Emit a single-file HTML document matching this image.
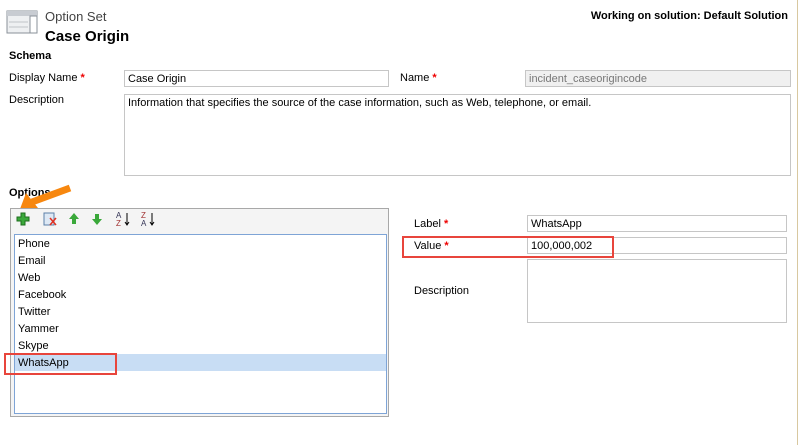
<!DOCTYPE html>
<html><head><style>
body{margin:0;width:800px;height:445px;background:#fff;font-family:"Liberation Sans",sans-serif;font-size:11px;color:#000;position:relative;overflow:hidden}
.a{position:absolute}
.in{position:absolute;border:1px solid #c6c6c6;background:#fff;box-sizing:border-box;padding:2px 3px 0;font-size:11px}
.st{color:#e00;font-weight:bold}
.item{position:absolute;left:18px;font-size:11px}
</style></head><body>
<div class="a" style="right:2px;top:0;width:1px;height:445px;background:#d8c8a0"></div>
<svg class="a" style="left:6px;top:10px" width="34" height="26"><rect x="1" y="1" width="30" height="22" fill="#eef0f2" stroke="#8a9098"/><rect x="1" y="1" width="30" height="5" fill="#c8ccd2"/><rect x="24" y="6" width="7" height="17" fill="#fff" stroke="#8a9098"/><line x1="3" y1="12" x2="22" y2="12" stroke="#c0c4c8"/><line x1="3" y1="17" x2="22" y2="17" stroke="#c0c4c8"/></svg>
<div class="a" style="left:45px;top:9px;font-size:13px;color:#444">Option Set</div>
<div class="a" style="left:45px;top:28px;font-size:15px;font-weight:bold">Case Origin</div>
<div class="a" style="right:12px;top:10px;font-size:11px;font-weight:bold">Working on solution: Default Solution</div>
<div class="a" style="left:9px;top:50px;font-weight:bold">Schema</div>
<div class="a" style="left:9px;top:72px">Display Name <span class="st">*</span></div>
<div class="in" style="left:124px;top:70px;width:265px;height:17px">Case Origin</div>
<div class="a" style="left:400px;top:72px">Name <span class="st">*</span></div>
<div class="in" style="left:525px;top:70px;width:266px;height:17px;background:#f0f0f0;color:#777">incident_caseorigincode</div>
<div class="a" style="left:9px;top:94px">Description</div>
<div class="in" style="left:124px;top:94px;width:667px;height:82px">Information that specifies the source of the case information, such as Web, telephone, or email.</div>
<div class="a" style="left:9px;top:187px;font-weight:bold">Options</div>
<svg class="a" style="left:14px;top:184px" width="60" height="30"><path d="M56 4 L18 18" stroke="#f7870f" stroke-width="7"/><path d="M6 25 L12 9 L24 24 Z" fill="#f7870f"/></svg>
<div class="a" style="left:10px;top:208px;width:379px;height:209px;border:1px solid #a8a8a8;box-sizing:border-box;background:#f4f4f4"></div>
<svg class="a" style="left:16px;top:210px" width="150" height="18">
<path d="M5 3h4v4h4v4h-4v4h-4v-4h-4v-4h4z" fill="#3aa83a" stroke="#1d6e1d"/>
<rect x="28" y="3" width="10" height="12" fill="#dde8f4" stroke="#5c7fa8"/><path d="M34 8l6 7M40 8l-6 7" stroke="#e03020" stroke-width="1.5"/>
<path d="M58 3l5 6h-3v5h-4v-5h-3z" fill="#3aa83a"/>
<path d="M81 15l5-6h-3v-5h-4v5h-3z" fill="#3aa83a"/>
<text x="100" y="8" font-size="8" fill="#335">A</text><text x="100" y="16" font-size="8" fill="#a03030">Z</text><path d="M111 3v12M109 12l2 3 2-3" stroke="#000" fill="none"/>
<text x="125" y="8" font-size="8" fill="#a03030">Z</text><text x="125" y="16" font-size="8" fill="#335">A</text><path d="M136 3v12M134 12l2 3 2-3" stroke="#000" fill="none"/>
</svg>
<div class="a" style="left:14px;top:234px;width:373px;height:180px;border:1px solid #7ea4d6;box-sizing:border-box;background:#fff"></div>
<div class="a" style="left:15px;top:354px;width:371px;height:17px;background:#c8ddf4"></div>
<div class="item" style="top:238px">Phone</div>
<div class="item" style="top:255px">Email</div>
<div class="item" style="top:272px">Web</div>
<div class="item" style="top:289px">Facebook</div>
<div class="item" style="top:306px">Twitter</div>
<div class="item" style="top:323px">Yammer</div>
<div class="item" style="top:340px">Skype</div>
<div class="item" style="top:357px">WhatsApp</div>
<div class="a" style="left:4px;top:353px;width:113px;height:22px;border:2px solid #e8453c;box-sizing:border-box"></div>
<div class="a" style="left:414px;top:218px">Label <span class="st">*</span></div>
<div class="in" style="left:527px;top:215px;width:260px;height:17px">WhatsApp</div>
<div class="a" style="left:414px;top:240px">Value <span class="st">*</span></div>
<div class="in" style="left:527px;top:237px;width:260px;height:17px">100,000,002</div>
<div class="a" style="left:402px;top:236px;width:212px;height:22px;border:2px solid #e8453c;box-sizing:border-box"></div>
<div class="a" style="left:414px;top:285px">Description</div>
<div class="in" style="left:527px;top:259px;width:260px;height:64px"></div>
</body></html>
